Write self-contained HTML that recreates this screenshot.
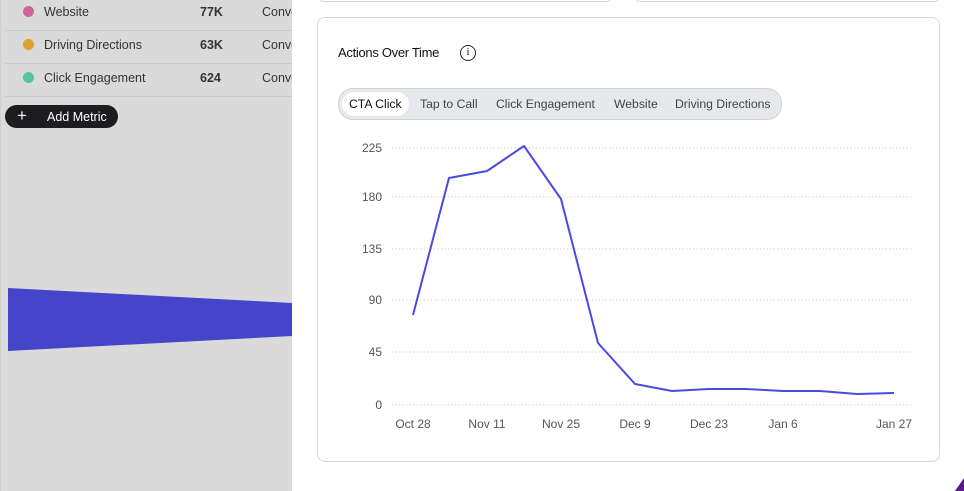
<!DOCTYPE html>
<html><head><style>
body{margin:0;width:964px;height:491px;overflow:hidden;position:relative;font-family:"Liberation Sans",sans-serif;background:#fff}
.left{position:absolute;left:0;top:0;width:292px;height:491px;background:#dadada;overflow:hidden;border-left:1px solid #cfcfcf;box-sizing:border-box}
.row{position:absolute;left:4px;width:300px;height:33px;border-bottom:1px solid #c9c9cf;font-size:12.5px;color:#333}
.row .d{position:absolute;left:18px;top:9px;width:11px;height:11px;border-radius:50%}
.row .n{position:absolute;left:39px;top:8px}
.row .v{position:absolute;left:195px;top:8px;font-weight:bold}
.row .c{position:absolute;left:257px;top:8px}
.btn{position:absolute;left:4px;top:105px;width:113px;height:23px;border-radius:12px;background:#1d1d1f;color:#fff;font-size:12.5px}
.card{position:absolute;left:317px;top:17px;width:621px;height:443px;border:1px solid #d8d8dc;border-radius:8px;background:#fff}
.tabs{position:absolute;left:338px;top:88px;width:442px;height:30px;border:1px solid #d0d3d9;border-radius:15px;background:#e6e8ec;font-size:12.2px;color:#444}
.tabs span{position:absolute;top:8px}
</style></head><body>
<div class="left">
<div class="row" style="top:-3px"><div class="d" style="background:#d0659a"></div><span class="n">Website</span><span class="v">77K</span><span class="c">Conve</span></div>
<div class="row" style="top:30px"><div class="d" style="background:#e0a030"></div><span class="n">Driving Directions</span><span class="v">63K</span><span class="c">Conve</span></div>
<div class="row" style="top:63px"><div class="d" style="background:#55c4a8"></div><span class="n">Click Engagement</span><span class="v">624</span><span class="c">Conve</span></div>
<div class="btn"><span style="position:absolute;left:12px;top:1px;font-size:17px">+</span><span style="position:absolute;left:42px;top:5px">Add Metric</span></div>
<svg style="position:absolute;left:-1px;top:0" width="293" height="491"><polygon points="8,288 293,303 293,336 8,351" fill="#4545c9"/></svg>
</div>
<div style="position:absolute;left:318px;top:-10px;width:292px;height:10px;border:1px solid #d8d8dc;border-radius:8px"></div>
<div style="position:absolute;left:634px;top:-10px;width:304px;height:10px;border:1px solid #d8d8dc;border-radius:8px"></div>
<div class="card"></div>
<div style="position:absolute;left:338px;top:45px;font-size:13px;color:#111;letter-spacing:-0.3px">Actions Over Time</div>
<div style="position:absolute;left:460px;top:45px;width:14px;height:14px;border:1.3px solid #222;border-radius:50%;font-size:10px;text-align:center;line-height:14px;font-family:'Liberation Serif',serif">i</div>
<div class="tabs">
<div style="position:absolute;left:3px;top:3px;width:67px;height:24px;background:#fff;border-radius:12px"></div>
<span style="left:10px;color:#111">CTA Click</span><span style="left:81px">Tap to Call</span><span style="left:157px">Click Engagement</span><span style="left:275px">Website</span><span style="left:336px">Driving Directions</span>
</div>
<svg style="position:absolute;left:0;top:0" width="964" height="491" font-family="Liberation Sans" font-size="12" fill="#555">
<g stroke="#cfcfcf" stroke-dasharray="1.5 2">
<line x1="392" y1="148" x2="914" y2="148"/><line x1="392" y1="197" x2="914" y2="197"/><line x1="392" y1="249" x2="914" y2="249"/><line x1="392" y1="300" x2="914" y2="300"/><line x1="392" y1="352" x2="914" y2="352"/><line x1="392" y1="405" x2="914" y2="405"/>
</g>
<g text-anchor="end"><text x="382" y="152">225</text><text x="382" y="201">180</text><text x="382" y="253">135</text><text x="382" y="304">90</text><text x="382" y="356">45</text><text x="382" y="409">0</text></g>
<g text-anchor="middle"><text x="413" y="428">Oct 28</text><text x="487" y="428">Nov 11</text><text x="561" y="428">Nov 25</text><text x="635" y="428">Dec 9</text><text x="709" y="428">Dec 23</text><text x="783" y="428">Jan 6</text><text x="894" y="428">Jan 27</text></g>
<polyline fill="none" stroke="#4a4ae0" stroke-width="2" stroke-linejoin="round" points="413,315 449,178 487,171 524,146 561,199 598,343 635,384 672,391 709,389 746,389 783,391 820,391 857,394 894,393"/>
<polygon points="964,478 964,491 955,491" fill="#5a1a8a"/>
</svg>
</body></html>
